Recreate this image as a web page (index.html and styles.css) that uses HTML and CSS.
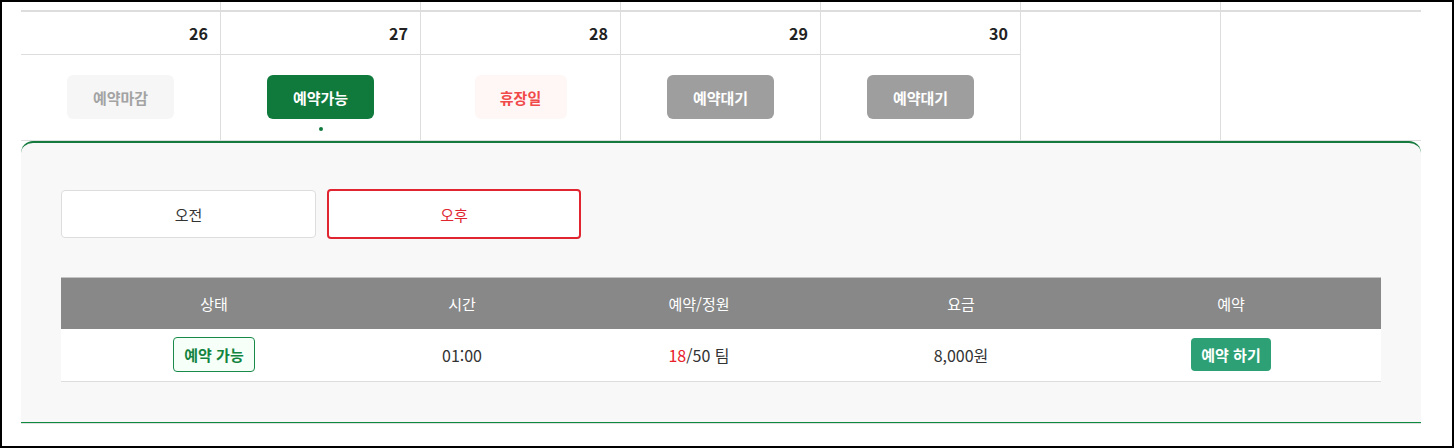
FILE: index.html
```html
<!DOCTYPE html>
<html lang="ko">
<head>
<meta charset="utf-8">
<link rel="stylesheet" href="styles.css">
</head>
<body>
<div class="frame">
  <div class="calendar">
    <div class="week prev">
      <div class="cell"></div><div class="cell"></div><div class="cell"></div><div class="cell"></div><div class="cell"></div><div class="cell"></div><div class="cell"></div>
    </div>
    <div class="week">
      <div class="cell">
        <div class="date">26</div>
        <div class="status"><span class="chip closed">예약마감</span></div>
      </div>
      <div class="cell">
        <div class="date">27</div>
        <div class="status"><span class="chip open">예약가능</span><span class="dot"></span></div>
      </div>
      <div class="cell">
        <div class="date">28</div>
        <div class="status"><span class="chip holiday">휴장일</span></div>
      </div>
      <div class="cell">
        <div class="date">29</div>
        <div class="status"><span class="chip wait">예약대기</span></div>
      </div>
      <div class="cell">
        <div class="date">30</div>
        <div class="status"><span class="chip wait">예약대기</span></div>
      </div>
      <div class="cell"></div>
      <div class="cell"></div>
    </div>
    <div class="panel">
      <div class="tabs">
        <button class="tab">오전</button>
        <button class="tab active">오후</button>
      </div>
      <table class="slots">
        <colgroup>
          <col class="c1"><col class="c2"><col class="c3"><col class="c4"><col class="c5">
        </colgroup>
        <thead>
          <tr><th>상태</th><th>시간</th><th>예약/정원</th><th>요금</th><th>예약</th></tr>
        </thead>
        <tbody>
          <tr>
            <td><span class="badge">예약 가능</span></td>
            <td>01:00</td>
            <td><span class="red">18</span>/50 팀</td>
            <td>8,000원</td>
            <td><button class="book">예약 하기</button></td>
          </tr>
        </tbody>
      </table>
    </div>
    <div class="under"></div>
  </div>
</div>
</body>
</html>
```
FILE: styles.css
```css
* { box-sizing: border-box; }
html, body { margin: 0; padding: 0; background: #fff; }
body {
  font-family: "Noto Sans CJK KR", "Noto Sans", sans-serif;
  color: #333;
}
.frame {
  width: 1454px;
  height: 448px;
  border: 2px solid #000;
  overflow: hidden;
  padding-left: 19px;
}
.calendar { width: 1400px; }
.week {
  display: grid;
  grid-template-columns: repeat(7, 200px);
}
.week.prev { height: 8px; }
.week:not(.prev) {
  border-top: 2px solid #ddd;
  border-bottom: 1px solid #ddd;
}
.cell { border-right: 1px solid #ddd; }
.cell:last-child { border-right: none; }
.week:not(.prev) .cell { height: 128px; }
.date {
  height: 43px;
  line-height: 42px;
  border-bottom: 1px solid #ddd;
  text-align: right;
  padding-right: 12px;
  font-size: 16px;
  font-weight: 700;
  color: #222;
}
.status {
  display: flex;
  flex-direction: column;
  align-items: center;
  padding-top: 20px;
}
.chip {
  display: flex;
  align-items: center;
  justify-content: center;
  width: 107px;
  height: 44px;
  border-radius: 6px;
  font-size: 15px;
  font-weight: 700;
}
.chip.closed { background: #f6f6f6; color: #a3a3a3; }
.chip.open { background: #0f7a3c; color: #fff; }
.chip.holiday { background: #fff6f6; color: #f04a4a; width: 92px; }
.chip.wait { background: #9e9e9e; color: #fff; }
.dot {
  width: 4px; height: 4px; border-radius: 50%;
  background: #0f7a3c;
  margin-top: 8px;
}
.panel {
  background: #f8f8f8;
  border-top: 2px solid #157a3d;
  border-radius: 12px 12px 0 0;
  padding: 46px 39px 40px 40px;
}
.panel-end { }
.under { height: 1px; background: #0e8a3e; box-shadow: 0 1px 0 #e0e0e0; }
.tabs {
  display: flex;
  align-items: center;
  gap: 11px;
  height: 50px;
}
.tab {
  font-family: inherit;
  font-size: 15px;
  color: #333;
  background: #fff;
  border: 1px solid #ddd;
  border-radius: 4px;
  width: 255px;
  height: 48px;
  padding: 0;
}
.tab.active {
  width: 254px;
  height: 50px;
  border: 2px solid #e02530;
  color: #e02530;
}
.slots {
  margin-top: 38px;
  width: 1320px;
  border-collapse: collapse;
  table-layout: fixed;
}
.c1 { width: 306px; } .c2 { width: 190px; } .c3 { width: 284px; } .c4 { width: 240px; } .c5 { width: 300px; }
.slots th {
  background: #888;
  color: #fff;
  font-weight: 400;
  font-size: 15px;
  height: 51px;
  border-top: 1px solid #c4c4c4;
  padding: 0;
}
.slots td {
  background: #fff;
  height: 53px;
  border-bottom: 1px solid #ddd;
  text-align: center;
  font-size: 16px;
  color: #333;
  padding: 0;
}
.red { color: #e8202a; }
.badge {
  display: inline-flex;
  align-items: center;
  justify-content: center;
  width: 82px;
  height: 35px;
  border: 1px solid #1a8a4a;
  border-radius: 4px;
  background: #f6fff8;
  color: #13843f;
  font-weight: 700;
  font-size: 15px;
  vertical-align: middle;
}
.book {
  font-family: inherit;
  width: 80px;
  height: 33px;
  border: none;
  border-radius: 4px;
  background: #2da175;
  color: #fff;
  font-weight: 700;
  font-size: 15px;
  padding: 0;
  vertical-align: middle;
}
```
